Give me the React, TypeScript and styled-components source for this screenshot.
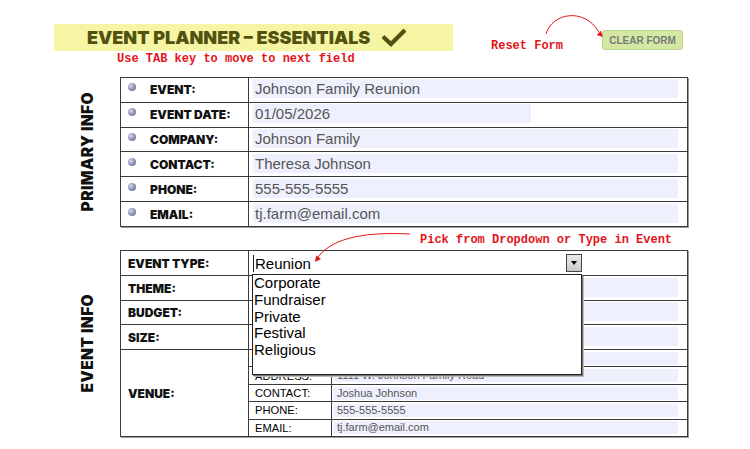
import React from "react";
import styled, { createGlobalStyle } from "styled-components";

const Global = createGlobalStyle`
  html, body { margin: 0; padding: 0; background: #fff; }
  body { width: 750px; height: 449px; overflow: hidden; font-family: "Liberation Sans", Arial, sans-serif; }
  * { box-sizing: border-box; }
`;

const HEAVY = `"Inter", "Lato", "Liberation Sans", sans-serif`;
const MONO = `"Liberation Mono", "Courier New", monospace`;
const RED = "#e3151b";
const LINE = "#3a3a3a";
const FIELD = "#eef0fd";

const Page = styled.div`
  position: relative;
  width: 750px;
  height: 449px;
  padding: 24px 0 0 54px;
`;

const Header = styled.header`
  display: flex;
  align-items: flex-start;
  height: 53px;
`;

const HeadLeft = styled.div`
  display: flex;
  flex-direction: column;
  width: 399px;
`;

const Banner = styled.div`
  height: 27px;
  background: #f5f5a4;
  display: flex;
  align-items: center;
  padding-left: 33px;
  gap: 12px;
`;

const Title = styled.h1`
  margin: 0;
  font-family: ${HEAVY};
  font-weight: 900;
  font-size: 18px;
  line-height: 1;
  color: #525210;
  white-space: nowrap;
`;

const Hint = styled.div`
  margin: 1px 0 0 63px;
  font-family: ${MONO};
  font-weight: bold;
  font-size: 12px;
  line-height: 14px;
  color: ${RED};
  white-space: nowrap;
`;

const HeadRight = styled.div`
  display: flex;
  align-items: flex-start;
  margin-left: 38px;
  padding-top: 6px;
`;

const ResetLabel = styled.span`
  margin-top: 9px;
  font-family: ${MONO};
  font-weight: bold;
  font-size: 12px;
  line-height: 14px;
  color: ${RED};
  white-space: nowrap;
`;

const ClearButton = styled.button`
  margin-left: 39px;
  width: 81px;
  height: 20px;
  padding: 0;
  background: #d3e8a3;
  border: 1px solid #bcd58e;
  border-radius: 3px;
  font-family: "Liberation Sans", Arial, sans-serif;
  font-weight: bold;
  font-size: 10px;
  color: #7a7a7a;
  display: flex;
  align-items: center;
  justify-content: center;
`;

const Section = styled.section`
  display: flex;
`;

const SideLabel = styled.div`
  width: 66px;
  display: flex;
  align-items: center;
  justify-content: center;
`;

const SideText = styled.span`
  writing-mode: vertical-rl;
  transform: rotate(180deg);
  font-family: ${HEAVY};
  font-weight: 900;
  font-size: 15.5px;
  letter-spacing: 0.4px;
  color: #111;
  white-space: nowrap;
`;

const Table = styled.div<{ $height: number }>`
  width: 568px;
  height: ${(p) => p.$height}px;
  border: 1px solid ${LINE};
  box-shadow: 1px 1px 0 #9a9a9a;
  display: flex;
  flex-direction: column;
`;

const Row = styled.div<{ $h?: number }>`
  display: grid;
  grid-template-columns: 128px 1fr;
  ${(p) => (p.$h ? `height: ${p.$h}px; flex: none;` : `flex: 1;`)}
  border-bottom: 1px solid ${LINE};
  &:last-child { border-bottom: none; }
`;

const LabelCell = styled.div`
  border-right: 1px solid ${LINE};
  display: flex;
  align-items: center;
  padding-left: 7px;
  gap: 14px;
  font-family: ${HEAVY};
  font-weight: 900;
  font-size: 12px;
  color: #111;
  white-space: nowrap;
`;

const Bullet = styled.span`
  width: 8px;
  height: 8px;
  border-radius: 50%;
  margin-top: -5px;
  background: radial-gradient(circle at 35% 35%, #d4d6e8 0%, #8a8db4 55%, #5d6090 100%);
  flex: none;
`;

const ValueCell = styled.div`
  display: flex;
  align-items: center;
  padding: 0 9px 0 4px;
  position: relative;
  min-width: 0;
`;

const Field = styled.div<{ $w?: number }>`
  ${(p) => (p.$w ? `width: ${p.$w}px;` : `flex: 1;`)}
  height: 19px;
  margin-top: -2px;
  background: ${FIELD};
  padding-left: 2px;
  font-size: 15px;
  line-height: 19px;
  color: #555;
  white-space: nowrap;
  overflow: hidden;
`;

const Combo = styled.div`
  position: relative;
  width: 329px;
  height: 18px;
  display: flex;
  align-items: center;
`;

const Caret = styled.span`
  width: 1px;
  height: 17px;
  background: #222;
  margin-right: 1px;
`;

const ComboText = styled.span`
  font-size: 15px;
  color: #000;
  flex: 1;
`;

const ComboButton = styled.span`
  width: 16px;
  height: 18px;
  border: 1px solid #444;
  background: linear-gradient(#e8e8e8, #c9c9c9);
  display: flex;
  align-items: center;
  justify-content: center;
  &::after {
    content: "";
    border-left: 3px solid transparent;
    border-right: 3px solid transparent;
    border-top: 4px solid #000;
  }
`;

const List = styled.ul`
  position: absolute;
  left: -1px;
  top: 20px;
  width: 330px;
  height: 101px;
  margin: 0;
  padding: 0 0 0 1px;
  list-style: none;
  background: #fff;
  border: 1px solid #222;
  box-shadow: 1px 1px 0 #777, 2px 2px 0 #bbb;
  z-index: 5;
`;

const ListItem = styled.li`
  font-size: 15px;
  line-height: 16.75px;
  color: #000;
`;

const Between = styled.div`
  height: 23px;
  padding: 2px 0 0 366px;
`;

const Note = styled.span`
  font-family: ${MONO};
  font-weight: bold;
  font-size: 12px;
  line-height: 13px;
  color: ${RED};
  white-space: nowrap;
`;

const SubTable = styled.div`
  display: flex;
  flex-direction: column;
`;

const SubRow = styled.div`
  flex: 1;
  display: grid;
  grid-template-columns: 83px 1fr;
  border-bottom: 1px solid ${LINE};
  &:last-child { border-bottom: none; }
`;

const SubLabel = styled.div`
  border-right: 1px solid ${LINE};
  display: flex;
  align-items: center;
  padding-left: 6px;
  font-size: 11.2px;
  color: #000;
  white-space: nowrap;
`;

const SubValue = styled.div`
  display: flex;
  align-items: center;
  padding: 0 9px 0 1px;
`;

const SubField = styled.div`
  flex: 1;
  height: 13px;
  background: ${FIELD};
  padding-left: 4px;
  font-size: 11px;
  line-height: 13px;
  color: #555;
  white-space: nowrap;
  overflow: hidden;
`;

const Overlay = styled.svg`
  position: absolute;
  left: 0;
  top: 0;
  width: 750px;
  height: 449px;
  pointer-events: none;
`;

const primary: { label: string; value: string; w?: number }[] = [
  { label: "EVENT:", value: "Johnson Family Reunion" },
  { label: "EVENT DATE:", value: "01/05/2026", w: 278 },
  { label: "COMPANY:", value: "Johnson Family" },
  { label: "CONTACT:", value: "Theresa Johnson" },
  { label: "PHONE:", value: "555-555-5555" },
  { label: "EMAIL:", value: "tj.farm@email.com" },
];

const venue = [
  { label: "", value: "" },
  { label: "ADDRESS:", value: "1111 W. Johnson Family Road" },
  { label: "CONTACT:", value: "Joshua Johnson" },
  { label: "PHONE:", value: "555-555-5555" },
  { label: "EMAIL:", value: "tj.farm@email.com" },
];

const options = ["Corporate", "Fundraiser", "Private", "Festival", "Religious"];

export default function App() {
  return (
    <>
      <Global />
      <Page>
        <Header>
          <HeadLeft>
            <Banner>
              <Title>EVENT PLANNER – ESSENTIALS</Title>
              <svg width="24" height="18" viewBox="0 0 24 18">
                <path d="M2.5 9 L9 15 L21.5 2.5" fill="none" stroke="#525210" strokeWidth="4.2" strokeLinecap="square" />
              </svg>
            </Banner>
            <Hint>Use TAB key to move to next field</Hint>
          </HeadLeft>
          <HeadRight>
            <ResetLabel>Reset Form</ResetLabel>
            <ClearButton>CLEAR FORM</ClearButton>
          </HeadRight>
        </Header>

        <Section>
          <SideLabel>
            <SideText>PRIMARY INFO</SideText>
          </SideLabel>
          <Table $height={150}>
            {primary.map((r) => (
              <Row key={r.label}>
                <LabelCell>
                  <Bullet />
                  {r.label}
                </LabelCell>
                <ValueCell>
                  <Field $w={r.w}>{r.value}</Field>
                </ValueCell>
              </Row>
            ))}
          </Table>
        </Section>

        <Between>
          <Note>Pick from Dropdown or Type in Event</Note>
        </Between>

        <Section>
          <SideLabel>
            <SideText>EVENT INFO</SideText>
          </SideLabel>
          <Table $height={187}>
            <Row $h={25}>
              <LabelCell>EVENT TYPE:</LabelCell>
              <ValueCell>
                <Combo>
                  <Caret />
                  <ComboText>Reunion</ComboText>
                  <ComboButton />
                  <List>
                    {options.map((o) => (
                      <ListItem key={o}>{o}</ListItem>
                    ))}
                  </List>
                </Combo>
              </ValueCell>
            </Row>
            <Row $h={25}>
              <LabelCell>THEME:</LabelCell>
              <ValueCell>
                <Field />
              </ValueCell>
            </Row>
            <Row $h={24}>
              <LabelCell>BUDGET:</LabelCell>
              <ValueCell>
                <Field />
              </ValueCell>
            </Row>
            <Row $h={25}>
              <LabelCell>SIZE:</LabelCell>
              <ValueCell>
                <Field />
              </ValueCell>
            </Row>
            <Row>
              <LabelCell>VENUE:</LabelCell>
              <SubTable>
                {venue.map((v, i) => (
                  <SubRow key={i}>
                    <SubLabel>{v.label}</SubLabel>
                    <SubValue>
                      <SubField>{v.value}</SubField>
                    </SubValue>
                  </SubRow>
                ))}
              </SubTable>
            </Row>
          </Table>
        </Section>

        <Overlay viewBox="0 0 750 449">
          <path d="M546 34 C 552 13, 584 7, 599 32" fill="none" stroke={RED} strokeWidth="1" />
          <polygon points="603,37 596.7,34.9 600.9,30.7" fill={RED} />
          <path d="M410 234 C 370 232, 334 236, 318 257" fill="none" stroke={RED} strokeWidth="1" />
          <polygon points="315,262 321,259 316.2,255.4" fill={RED} />
        </Overlay>
      </Page>
    </>
  );
}
